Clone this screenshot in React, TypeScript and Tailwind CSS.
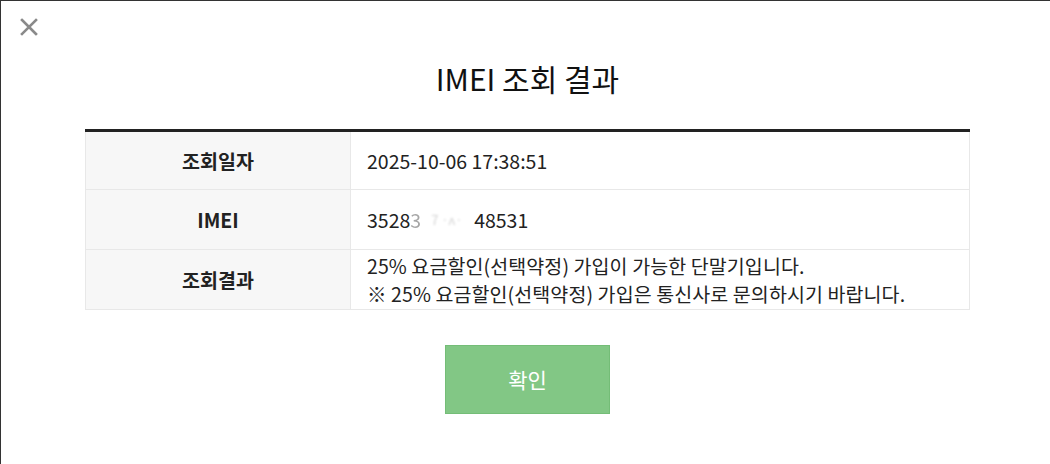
export default function App() {
  const font = { fontFamily: '"Noto Sans CJK KR", "Noto Sans", sans-serif' };

  return (
    <div
      style={font}
      className="relative w-[1050px] h-[464px] bg-white border-l border-t border-[#333] text-[#222] overflow-hidden"
    >
      <button className="absolute left-[18px] top-[16px] w-[20px] h-[20px] flex items-center justify-center">
        <svg width="18" height="18" viewBox="0 0 18 18">
          <path d="M2 2 L16 16 M16 2 L2 16" stroke="#8a8a8a" strokeWidth="2.6" strokeLinecap="square" />
        </svg>
      </button>

      <div className="flex flex-col items-center pt-[54px] pl-[4px]">
        <h1 className="text-[30px] leading-[46px] font-normal text-[#111]">IMEI 조회 결과</h1>

        <div className="mt-[28px] w-[885px] border-t-[3px] border-[#222]">
          <div className="grid grid-cols-[265px_1fr] border-x border-[#e8e8e8] text-[19.5px]">
            <div className="h-[58px] bg-[#f7f7f7] flex items-center justify-center font-bold border-r border-b border-[#e8e8e8]">
              조회일자
            </div>
            <div className="h-[58px] flex items-center pl-[16px] border-b border-[#e8e8e8]">
              2025-10-06 17:38:51
            </div>

            <div className="h-[60px] bg-[#f7f7f7] flex items-center justify-center font-bold border-r border-b border-[#e8e8e8]">
              IMEI
            </div>
            <div className="h-[60px] flex items-center pl-[16px] border-b border-[#e8e8e8]">
              <span>3528</span>
              <span className="opacity-40">3</span>
              <span className="w-[53px] pl-[10px] opacity-20 blur-[1px] text-[13px]">7 ·ʌ·</span>
              <span>48531</span>
            </div>

            <div className="h-[60px] bg-[#f7f7f7] flex items-center justify-center font-bold border-r border-b border-[#e8e8e8]">
              조회결과
            </div>
            <div className="h-[60px] flex flex-col justify-center pl-[16px] leading-[28px] tracking-[0.1px] border-b border-[#e8e8e8]">
              <p>25% 요금할인(선택약정) 가입이 가능한 단말기입니다.</p>
              <p>※ 25% 요금할인(선택약정) 가입은 통신사로 문의하시기 바랍니다.</p>
            </div>
          </div>
        </div>

        <button className="mt-[35px] w-[165px] h-[69px] bg-[#82c785] border border-[#74bd77] text-white text-[21px] flex items-center justify-center">
          확인
        </button>
      </div>
    </div>
  );
}
